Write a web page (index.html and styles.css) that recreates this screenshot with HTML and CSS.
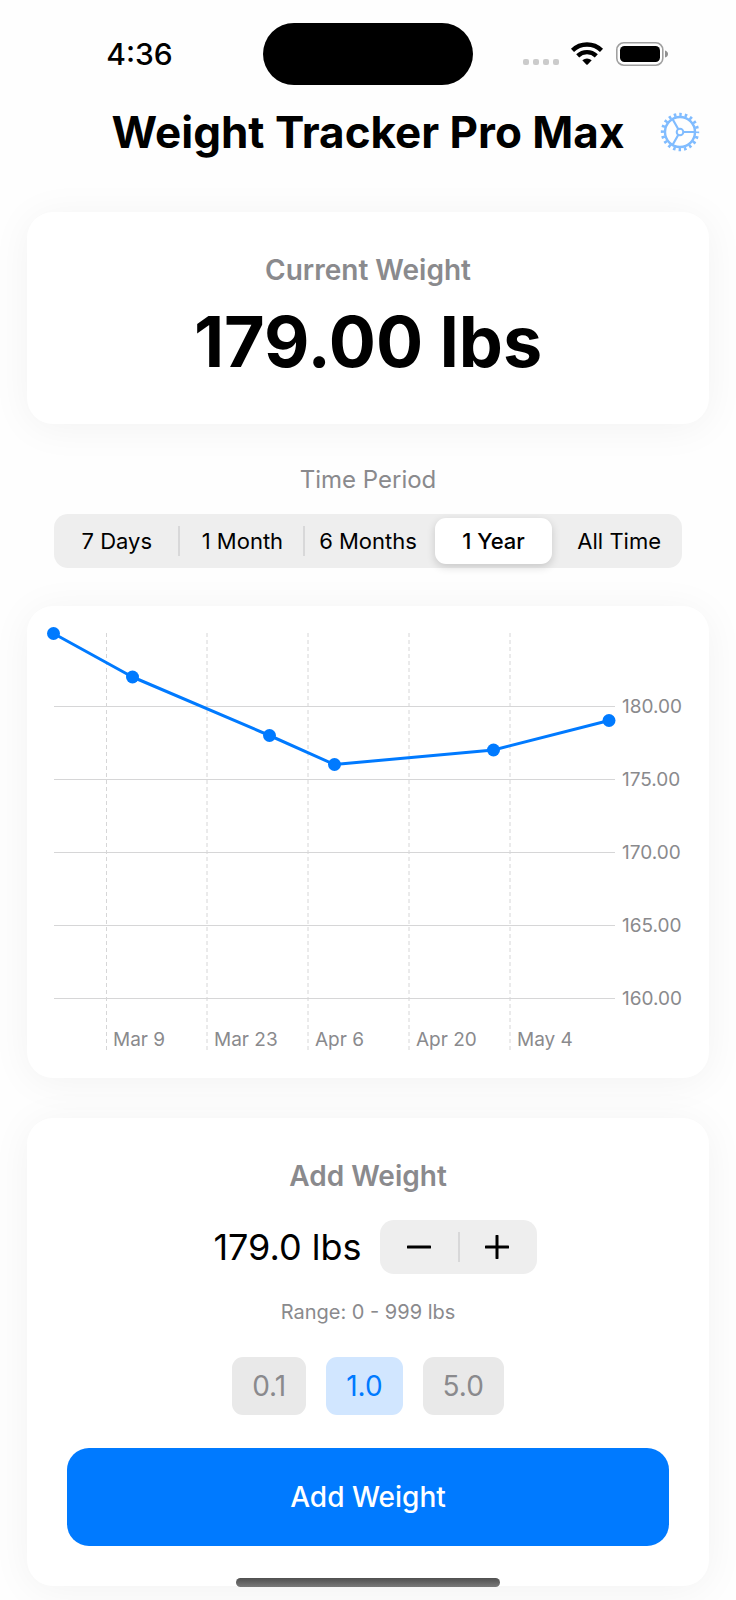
FILE: index.html
```html
<!DOCTYPE html>
<html lang="en">
<head>
    <meta charset="UTF-8">
    <meta name="viewport" content="width=device-width, initial-scale=1.0">
    <title>Weight Tracker Pro Max</title>
    <link rel="stylesheet" href="styles.css">
</head>
<body>
    <div class="statusBar">
        <div class="clock">4:36</div>
        <div class="island"></div>
        <div class="statusIcons">
            <svg width="146" height="24" viewBox="0 0 146 24" aria-hidden="true">
                <g fill="#cbcbcb">
                    <rect x="0" y="17" width="6" height="6" rx="2"/>
                    <rect x="10" y="17" width="6" height="6" rx="2"/>
                    <rect x="20" y="17" width="6" height="6" rx="2"/>
                    <rect x="30" y="17" width="6" height="6" rx="2"/>
                </g>
                <g fill="none" stroke="#000" stroke-width="4.400">
                    <path d="M49.500 8.300A21 21 0 0 1 78.500 8.300"/>
                    <path d="M54.700 13.800A13.500 13.500 0 0 1 73.300 13.800"/>
                </g>
                <path d="M59.300 18.300Q64 14.500 68.700 18.300L64.700 22.400Q64 23 63.300 22.400Z"/>
                <rect x="93.800" y="0.800" width="46" height="22.400" rx="7" fill="none" stroke="#a0a0a0" stroke-width="1.600"/>
                <rect x="97" y="4" width="40" height="16" rx="4.500"/>
                <path d="M142 8.500Q145 9.500 145 12T142 15.500Z" fill="#909090"/>
            </svg>
        </div>
    </div>

    <header class="header">
        <h1>Weight Tracker Pro Max</h1>
        <button type="button" class="settings" aria-label="Settings">
            <svg width="40" height="40" viewBox="-20 -20 40 40" fill="none" stroke="#80bcff">
                <circle r="15" stroke-width="2.400"/>
                <circle r="17.500" stroke-width="3.400" stroke-dasharray="2.500 2.998" stroke-dashoffset="1.250"/>
                <circle r="3.300" stroke-width="2"/>
                <path d="M3.500 0H15M-1.800 -3L-7.500 -13M-1.800 3L-7.500 13" stroke-width="2.200"/>
            </svg>
        </button>
    </header>

    <main class="content">
        <section class="card current">
            <h2>Current Weight</h2>
            <p class="bigWeight">179.00 lbs</p>
        </section>

        <section class="period">
            <p id="periodLabel" class="periodLabel">Time Period</p>
            <div class="segments" role="radiogroup" aria-labelledby="periodLabel">
                <label class="segment"><input type="radio" name="period"><span>7 Days</span></label>
                <label class="segment"><input type="radio" name="period"><span>1 Month</span></label>
                <label class="segment"><input type="radio" name="period"><span>6 Months</span></label>
                <label class="segment"><input type="radio" name="period" checked><span>1 Year</span></label>
                <label class="segment"><input type="radio" name="period"><span>All Time</span></label>
            </div>
        </section>

        <section class="card">
            <svg class="chart" viewBox="0 0 682 472" role="img" aria-label="Weight over time">
                <path class="gridX" d="M79.500 27V445M180 27V445M281 27V445M382 27V445M483 27V445"/>
                <path class="gridY" d="M27 100.500H588M27 173.500H588M27 246.500H588M27 319.500H588M27 392.500H588"/>
                <g class="axis">
                    <text x="595" y="107">180.00</text>
                    <text x="595" y="180">175.00</text>
                    <text x="595" y="253">170.00</text>
                    <text x="595" y="326">165.00</text>
                    <text x="595" y="399">160.00</text>
                    <text x="86" y="440">Mar 9</text>
                    <text x="187" y="440">Mar 23</text>
                    <text x="288" y="440">Apr 6</text>
                    <text x="389" y="440">Apr 20</text>
                    <text x="490" y="440">May 4</text>
                </g>
                <polyline class="line" points="26.500,27.500 105.500,71 242.500,129.500 307.500,158.500 466.500,144 582,114.500"/>
                <g class="dots">
                    <circle cx="26.500" cy="27.500" r="6.500"/>
                    <circle cx="105.500" cy="71" r="6.500"/>
                    <circle cx="242.500" cy="129.500" r="6.500"/>
                    <circle cx="307.500" cy="158.500" r="6.500"/>
                    <circle cx="466.500" cy="144" r="6.500"/>
                    <circle cx="582" cy="114.500" r="6.500"/>
                </g>
            </svg>
        </section>

        <section class="card add">
            <h2>Add Weight</h2>
            <div class="entry">
                <output class="entryValue">179.0 lbs</output>
                <div class="stepper">
                    <button type="button" aria-label="Decrease">
                        <svg width="24" height="24" viewBox="0 0 24 24"><path d="M1 12H23"/></svg>
                    </button>
                    <button type="button" aria-label="Increase">
                        <svg width="24" height="24" viewBox="0 0 24 24"><path d="M1 12H23M12 1V23"/></svg>
                    </button>
                </div>
            </div>
            <p class="range">Range: 0 - 999 lbs</p>
            <div class="steps" role="radiogroup" aria-label="Step size">
                <label class="step"><input type="radio" name="step"><span>0.1</span></label>
                <label class="step"><input type="radio" name="step" checked><span>1.0</span></label>
                <label class="step"><input type="radio" name="step"><span>5.0</span></label>
            </div>
            <button type="button" class="addButton">Add Weight</button>
        </section>
    </main>
    <div class="homeBar"></div>
</body>
</html>
```

FILE: styles.css
```css
*{
    box-sizing: border-box;
}
body{
    margin: 0;
    background-color: #fefefe;
    font-family: "Inter", "Liberation Sans", sans-serif;
    color: #000;
}
h1, h2, p{
    margin: 0;
}
button{
    border: none;
    padding: 0;
    background: none;
    font-family: inherit;
    color: inherit;
}
.statusBar{
    display: grid;
    grid-template-columns: 1fr 210px 1fr;
    align-items: center;
    padding-top: 23px;
}
.clock{
    padding-left: 16px;
    text-align: center;
    font-size: 30px;
    line-height: 36px;
    font-weight: 500;
}
.island{
    height: 62px;
    border-radius: 31px;
    background-color: #000;
}
.statusIcons{
    display: flex;
    justify-content: center;
    padding-right: 18px;
}
.header{
    display: grid;
    grid-template-columns: 1fr auto 1fr;
    align-items: center;
    height: 94px;
    padding: 0 36px;
}
.header h1{
    grid-column: 2;
    font-size: 44px;
    line-height: 54px;
    font-weight: 700;
}
.settings{
    justify-self: end;
    height: 40px;
}
.settings svg{
    display: block;
}
.content{
    padding: 33px 27px 14px;
}
.card{
    border-radius: 26px;
    background-color: #fff;
    box-shadow: 0 4px 40px rgba(0, 0, 0, 0.05);
}
.card h2{
    font-size: 28px;
    line-height: 36px;
    font-weight: 600;
    color: #8a8a8d;
}
.current{
    padding: 40px 20px 36px;
    text-align: center;
}
.bigWeight{
    padding: 14px 0 6px;
    font-size: 70px;
    line-height: 80px;
    font-weight: 700;
}
.period{
    padding: 41px 27px 38px;
    text-align: center;
}
.periodLabel{
    margin-bottom: 19px;
    font-size: 24px;
    line-height: 30px;
    color: #8a8a8d;
}
.segments{
    display: grid;
    grid-template-columns: repeat(5, 1fr);
    height: 54px;
    padding: 4px 0;
    border-radius: 14px;
    background-color: #eeeeee;
}
.segment{
    position: relative;
    display: flex;
    padding: 0 4px;
    font-size: 22px;
    white-space: nowrap;
}
.segment span{
    flex: 1;
    display: flex;
    align-items: center;
    justify-content: center;
    border-radius: 11px;
}
.segment input, .step input{
    position: absolute;
    opacity: 0;
    margin: 0;
}
.segment input:checked + span{
    background-color: #fff;
    box-shadow: 0 3px 8px rgba(0, 0, 0, 0.16);
    font-weight: 500;
}
.segment:nth-child(-n+2)::after{
    content: "";
    position: absolute;
    top: 8px;
    right: 0;
    width: 2px;
    height: 30px;
    background-color: #d8d8d9;
}
.chart{
    display: block;
    width: 100%;
    overflow: visible;
}
.gridX, .gridY{
    fill: none;
    stroke: #d6d6d7;
    stroke-width: 1;
}
.gridX{
    stroke-dasharray: 4 3;
}
.axis{
    font-size: 19px;
    fill: #8a8a8d;
}
.line{
    fill: none;
    stroke: #007aff;
    stroke-width: 3;
    stroke-linejoin: round;
}
.dots{
    fill: #007aff;
}
.add{
    margin-top: 40px;
    padding: 40px;
    text-align: center;
}
.entry{
    display: flex;
    justify-content: center;
    align-items: center;
    gap: 18px;
    margin-top: 26px;
    padding-left: 14px;
}
.entryValue{
    font-size: 36px;
    line-height: 44px;
}
.stepper{
    display: flex;
    width: 157px;
    height: 54px;
    border-radius: 14px;
    background-color: #eeeeee;
}
.stepper button{
    position: relative;
    flex: 1;
    display: flex;
    align-items: center;
    justify-content: center;
}
.stepper button + button::before{
    content: "";
    position: absolute;
    top: 12px;
    left: 0;
    width: 2px;
    height: 30px;
    background-color: #d8d8d9;
}
.stepper svg{
    fill: none;
    stroke: #000;
    stroke-width: 3;
    stroke-linecap: round;
}
.range{
    margin-top: 25px;
    font-size: 20px;
    line-height: 26px;
    color: #8a8a8d;
}
.steps{
    display: flex;
    justify-content: center;
    gap: 20px;
    margin-top: 32px;
}
.step{
    position: relative;
}
.step span{
    display: block;
    padding: 0 20px;
    border-radius: 11px;
    background-color: #e9e9e9;
    font-size: 28px;
    line-height: 58px;
    color: #8a8a8d;
}
.step input:checked + span{
    background-color: #d1e6ff;
    color: #007aff;
}
.addButton{
    width: 100%;
    height: 98px;
    margin-top: 33px;
    border-radius: 22px;
    background-color: #007aff;
    font-size: 28px;
    font-weight: 500;
    color: #fff;
}
.homeBar{
    position: fixed;
    bottom: 13px;
    left: 50%;
    width: 264px;
    height: 9px;
    margin-left: -132px;
    border-radius: 5px;
    background: linear-gradient(#505050, #7a7a7a);
}
```
